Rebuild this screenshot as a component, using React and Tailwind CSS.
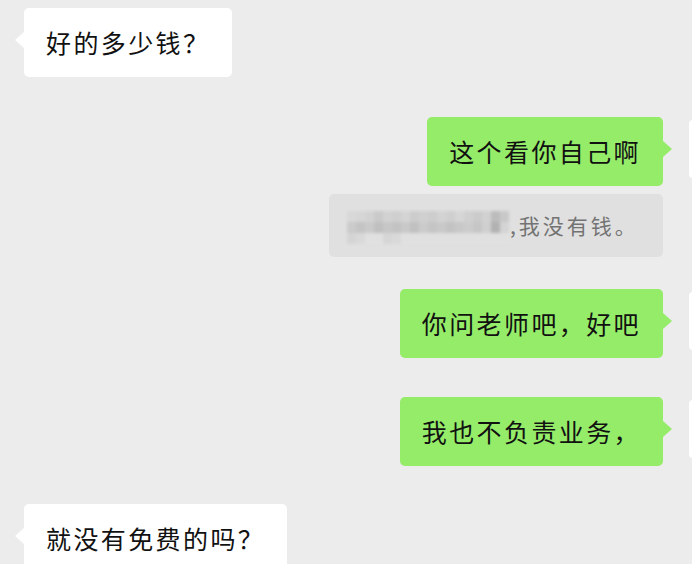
import React from 'react'

const font = { fontFamily: '"Noto Sans CJK SC", "Noto Sans", sans-serif' }

// pixelated (mosaic) name in the quoted reply
const mosaic = [
  ['bg-[#d8d8d8]', 'bg-[#d6d6d6]', 'bg-[#d2d2d2]', 'bg-[#cacaca]', 'bg-[#d2d2d2]', 'bg-[#cfcfcf]', 'bg-[#d4d4d4]', 'bg-[#cccccc]', 'bg-[#d0d0d0]', 'bg-[#cdcdcd]', 'bg-[#d3d3d3]', 'bg-[#cfcfcf]', 'bg-[#d6d6d6]', 'bg-[#d0d0d0]', 'bg-[#cbcbcb]', 'bg-[#d1d1d1]', 'bg-[#bcbcbc]', 'bg-[#c8c8c8]'],
  ['bg-[#cbcbcb]', 'bg-[#c4c4c4]', 'bg-[#cacaca]', 'bg-[#c0c0c0]', 'bg-[#c7c7c7]', 'bg-[#c3c3c3]', 'bg-[#c9c9c9]', 'bg-[#c1c1c1]', 'bg-[#cbcbcb]', 'bg-[#c5c5c5]', 'bg-[#c9c9c9]', 'bg-[#c3c3c3]', 'bg-[#c8c8c8]', 'bg-[#cccccc]', 'bg-[#c6c6c6]', 'bg-[#cfcfcf]', 'bg-[#b2b2b2]', 'bg-[#d4d4d4]'],
  ['bg-[#d4d4d4]', 'bg-[#d9d9d9]', 'bg-[#e0e0e0]', 'bg-[#e0e0e0]', 'bg-[#d6d6d6]', 'bg-[#d9d9d9]', 'bg-[#e0e0e0]', 'bg-[#e0e0e0]', 'bg-[#e0e0e0]', 'bg-[#e0e0e0]', 'bg-[#e0e0e0]', 'bg-[#e0e0e0]', 'bg-[#e0e0e0]', 'bg-[#e0e0e0]', 'bg-[#e0e0e0]', 'bg-[#e0e0e0]', 'bg-[#e0e0e0]', 'bg-[#e0e0e0]'],
]

function LeftBubble({ text, className = '' }) {
  return (
    <div className={`relative self-start ml-[24px] h-[69px] flex items-center px-[22px] rounded-[5px] bg-white text-[#111111] text-[25px] tracking-[2.4px] whitespace-nowrap ${className}`}>
      <span className="absolute left-[-9px] top-[24px] w-0 h-0 border-y-[8px] border-y-transparent border-r-[9px] border-r-white" />
      {text}
    </div>
  )
}

function RightBubble({ text, className = '' }) {
  return (
    <div className={`flex justify-end items-start gap-[26px] ${className}`}>
      <div className="relative h-[69px] flex items-center px-[22px] rounded-[5px] bg-[#95ec69] text-[#111111] text-[25px] tracking-[2.4px] whitespace-nowrap">
        {text}
        <span className="absolute right-[-9px] top-[24px] w-0 h-0 border-y-[8px] border-y-transparent border-l-[9px] border-l-[#95ec69]" />
      </div>
      <div className="mt-[3px] w-[58px] h-[58px] rounded-[4px] bg-white shrink-0" />
    </div>
  )
}

export default function App() {
  return (
    <div className="w-[692px] h-[564px] overflow-hidden bg-[#ececec]" style={font}>
      <div className="w-[747px] flex flex-col pt-[8px]">
        <LeftBubble text="好的多少钱？" />

        <RightBubble text="这个看你自己啊" className="mt-[40px]" />

        <div className="mt-[8px] flex justify-end gap-[26px]">
          <div className="w-[334px] h-[63px] rounded-[5px] bg-[#e0e0e0] flex items-center pl-[18px] pr-[16px]">
            <div className="flex flex-col blur-[1.8px] mt-[4px]">
              {mosaic.map((row, i) => (
                <div key={i} className="flex">
                  {row.map((c, j) => (
                    <div key={j} className={`w-[9px] h-[11px] ${c}`} />
                  ))}
                </div>
              ))}
            </div>
            <span className="text-[21px] tracking-[3px] text-[#737373] whitespace-nowrap ml-[1px]">,我没有钱。</span>
          </div>
          <div className="w-[58px] shrink-0" />
        </div>

        <RightBubble text="你问老师吧，好吧" className="mt-[32px]" />

        <RightBubble text="我也不负责业务，" className="mt-[39px]" />

        <LeftBubble text="就没有免费的吗？" className="mt-[38px]" />
      </div>
    </div>
  )
}
